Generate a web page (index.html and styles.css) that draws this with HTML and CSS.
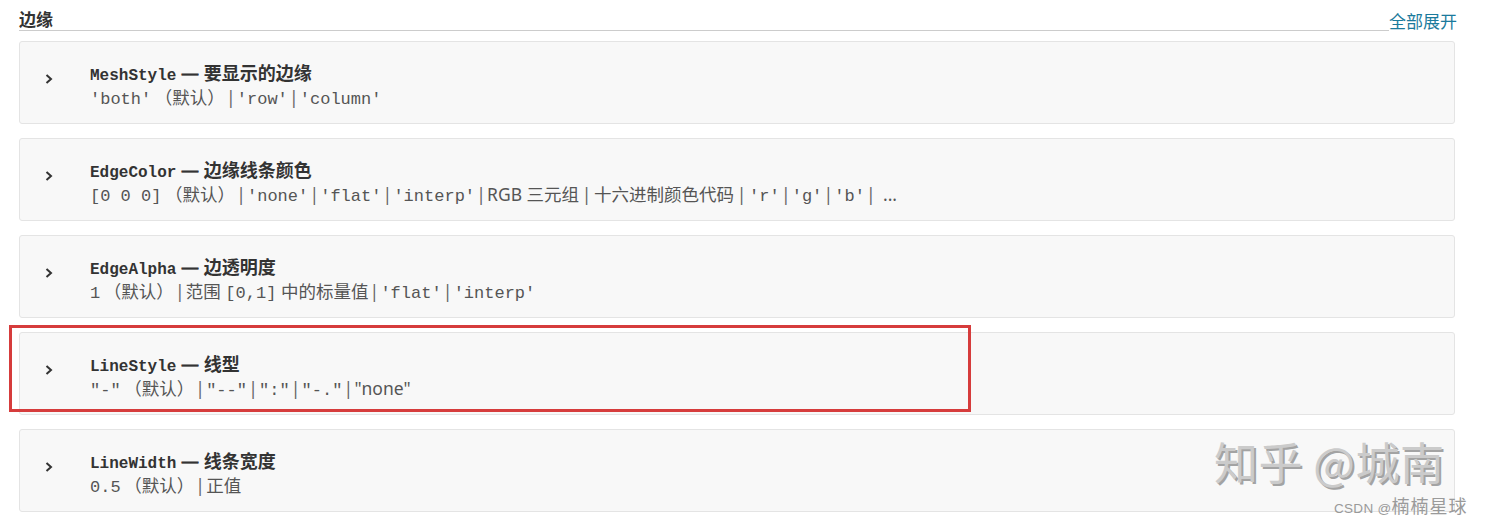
FILE: index.html
```html
<!DOCTYPE html>
<html lang="zh-CN">
<head>
    <meta charset="UTF-8">
    <title>边缘</title>
    <link rel="stylesheet" href="styles.css">
</head>
<body>

<div class="section">
    <div class="section-head">
        <h3 class="section-title">边缘</h3>
        <a class="expand-all" href="#">全部展开</a>
    </div>

    <div class="prop">
        <span class="chevron"><svg width="10" height="12" viewBox="0 0 10 12"><polyline points="2.5,2 7,6 2.5,10" fill="none" stroke="#333" stroke-width="2"/></svg></span>
        <div class="prop-body">
            <div class="prop-name"><code>MeshStyle</code><span class="dash"> — </span>要显示的边缘</div>
            <div class="prop-values"><code>'both'</code> <span class="dflt">（默认）</span><span class="sep">|</span><code>'row'</code><span class="sep">|</span><code>'column'</code></div>
        </div>
    </div>

    <div class="prop">
        <span class="chevron"><svg width="10" height="12" viewBox="0 0 10 12"><polyline points="2.5,2 7,6 2.5,10" fill="none" stroke="#333" stroke-width="2"/></svg></span>
        <div class="prop-body">
            <div class="prop-name"><code>EdgeColor</code><span class="dash"> — </span>边缘线条颜色</div>
            <div class="prop-values"><code>[0 0 0]</code> <span class="dflt">（默认）</span><span class="sep">|</span><code>'none'</code><span class="sep">|</span><code>'flat'</code><span class="sep">|</span><code>'interp'</code><span class="sep">|</span>RGB 三元组<span class="sep wide">|</span>十六进制颜色代码<span class="sep wide">|</span><code>'r'</code><span class="sep">|</span><code>'g'</code><span class="sep">|</span><code>'b'</code><span class="sep">|</span><span class="more">...</span></div>
        </div>
    </div>

    <div class="prop">
        <span class="chevron"><svg width="10" height="12" viewBox="0 0 10 12"><polyline points="2.5,2 7,6 2.5,10" fill="none" stroke="#333" stroke-width="2"/></svg></span>
        <div class="prop-body">
            <div class="prop-name"><code>EdgeAlpha</code><span class="dash"> — </span>边透明度</div>
            <div class="prop-values"><code>1</code> <span class="dflt">（默认）</span><span class="sep">|</span>范围 <code>[0,1]</code> 中的标量值<span class="sep">|</span><code>'flat'</code><span class="sep">|</span><code>'interp'</code></div>
        </div>
    </div>

    <div class="prop">
        <span class="chevron"><svg width="10" height="12" viewBox="0 0 10 12"><polyline points="2.5,2 7,6 2.5,10" fill="none" stroke="#333" stroke-width="2"/></svg></span>
        <div class="prop-body">
            <div class="prop-name"><code>LineStyle</code><span class="dash"> — </span>线型</div>
            <div class="prop-values"><code>"-"</code> <span class="dflt">（默认）</span><span class="sep">|</span><code>"--"</code><span class="sep">|</span><code>":"</code><span class="sep">|</span><code>"-."</code><span class="sep">|</span>"none"</div>
        </div>
    </div>

    <div class="prop">
        <span class="chevron"><svg width="10" height="12" viewBox="0 0 10 12"><polyline points="2.5,2 7,6 2.5,10" fill="none" stroke="#333" stroke-width="2"/></svg></span>
        <div class="prop-body">
            <div class="prop-name"><code>LineWidth</code><span class="dash"> — </span>线条宽度</div>
            <div class="prop-values"><code>0.5</code> <span class="dflt">（默认）</span><span class="sep">|</span>正值</div>
        </div>
    </div>
</div>

<div class="highlight"></div>
<div class="watermark">知乎 @城南</div>
<div class="credit"><span class="credit-site">CSDN @</span>楠楠星球</div>

</body>
</html>
```

FILE: styles.css
```css
body {
    margin: 0;
    background: #fff;
    font-family: "Noto Sans", "Noto Sans CJK SC", sans-serif;
    color: #333;
    position: relative;
    width: 1486px;
    height: 524px;
    overflow: hidden;
}

code {
    font-family: "Liberation Mono", "Noto Sans CJK SC", monospace;
}

.section {
    width: 1438px;
    margin-left: 19px;
    padding-top: 7px;
}

.section-head {
    display: flex;
    align-items: flex-end;
    margin-bottom: 10px;
}

.section-title {
    flex: 1;
    margin: 0;
    font-family: "Noto Sans CJK SC", sans-serif;
    font-size: 17px;
    font-weight: bold;
    line-height: 23px;
    color: #333;
    border-bottom: 1px solid #ccc;
}

.expand-all {
    font-family: "Noto Sans CJK SC", sans-serif;
    font-size: 17px;
    line-height: 22px;
    color: #1b7a9c;
    text-decoration: none;
    margin-bottom: -1px;
}

.prop {
    width: 1434px;
    height: 81px;
    display: flex;
    background: #f8f8f8;
    border: 1px solid #e4e4e4;
    border-radius: 3px;
    margin-bottom: 14px;
}

.chevron {
    width: 70px;
    padding: 26px 0 0 24px;
    box-sizing: border-box;
}

.prop-body {
    padding-top: 19px;
}

.prop-name,
.prop-values {
    height: 24px;
    line-height: 24px;
    white-space: nowrap;
}

.prop-name {
    font-family: "Noto Sans", "Noto Sans CJK SC", sans-serif;
    font-size: 18px;
    font-weight: bold;
    color: #333;
}

.prop-name code {
    font-size: 16px;
}

.dash {
    font-weight: normal;
    -webkit-text-stroke: 0.6px #333;
}

.prop-values {
    font-size: 17.5px;
    color: #555;
}

.prop-values code {
    font-size: 17px;
}

.dflt {
    font-family: "Noto Sans CJK SC", sans-serif;
    margin-left: -1px;
}

.sep {
    display: inline-block;
    width: 12px;
    text-align: center;
    color: #666;
}

.sep.wide {
    width: 15px;
}

.more {
    margin-left: 6px;
}

.highlight {
    position: absolute;
    left: 9px;
    top: 325px;
    width: 956px;
    height: 81px;
    border: 3px solid #d63c3c;
}

.watermark {
    position: absolute;
    left: 1214px;
    top: 433px;
    font-family: "Noto Sans CJK SC", sans-serif;
    font-size: 44px;
    line-height: 56px;
    color: #cbcbcb;
    text-shadow: 2px 2px 0 #a3a3a3;
    letter-spacing: 0.5px;
}

.credit {
    position: absolute;
    left: 1334px;
    top: 494px;
    font-family: "Noto Sans CJK SC", sans-serif;
    font-size: 18px;
    line-height: 22px;
    color: #9a9a9a;
    letter-spacing: 1px;
}

.credit-site {
    font-family: "Liberation Sans", sans-serif;
    font-size: 13.5px;
    letter-spacing: 0.3px;
}
```
